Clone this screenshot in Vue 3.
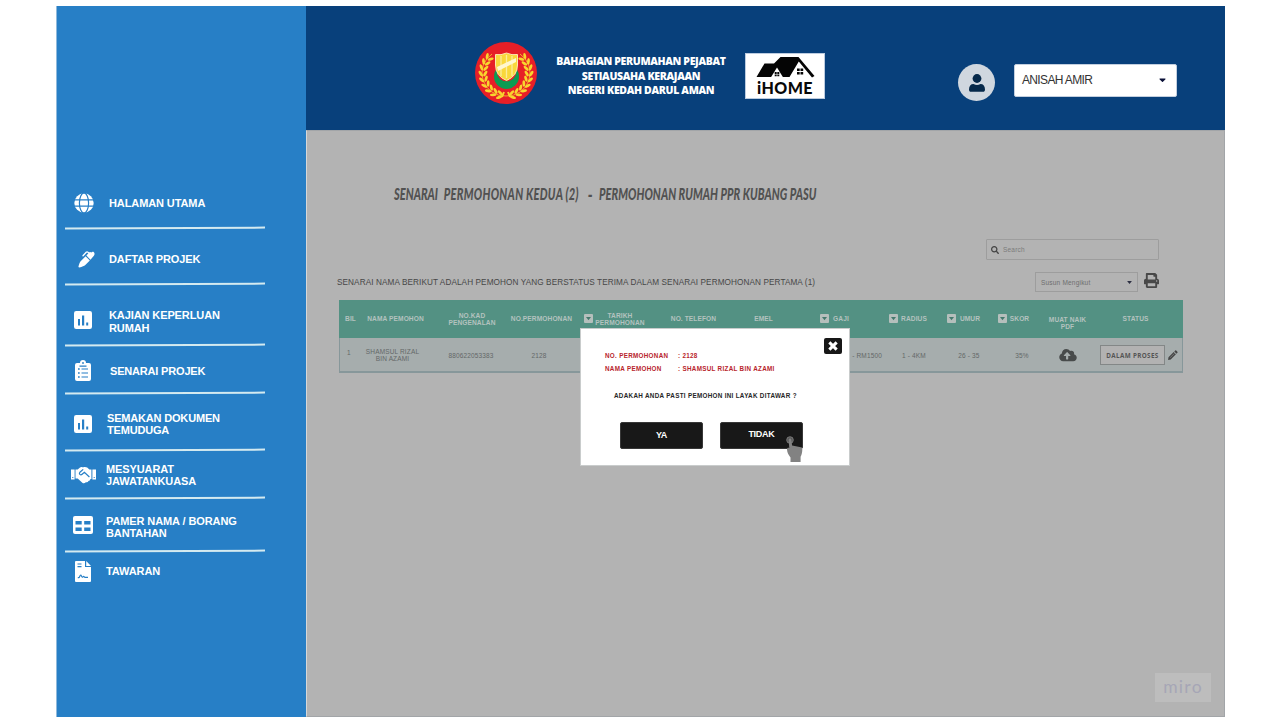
<script setup>
const menu = [
  { id: 'home', icon: 'globe', lines: ['HALAMAN UTAMA'] },
  { id: 'register', icon: 'pen', lines: ['DAFTAR PROJEK'] },
  { id: 'study', icon: 'chart', lines: ['KAJIAN KEPERLUAN', 'RUMAH'] },
  { id: 'projects', icon: 'clipboard', lines: ['SENARAI PROJEK'] },
  { id: 'documents', icon: 'chart', lines: ['SEMAKAN DOKUMEN', 'TEMUDUGA'] },
  { id: 'meeting', icon: 'handshake', lines: ['MESYUARAT', 'JAWATANKUASA'] },
  { id: 'display', icon: 'table', lines: ['PAMER NAMA / BORANG', 'BANTAHAN'] },
  { id: 'offer', icon: 'file', lines: ['TAWARAN'] },
]
const columns = [
  { lines: ['BIL'] },
  { lines: ['NAMA PEMOHON'] },
  { lines: ['NO.KAD', 'PENGENALAN'] },
  { lines: ['NO.PERMOHONAN'] },
  { lines: ['TARIKH', 'PERMOHONAN'], filter: 'tight' },
  { lines: ['NO. TELEFON'] },
  { lines: ['EMEL'] },
  { lines: ['GAJI'], filter: 'wide' },
  { lines: ['RADIUS'], filter: 'mid' },
  { lines: ['UMUR'], filter: 'wide' },
  { lines: ['SKOR'], filter: 'mid' },
  { lines: ['MUAT NAIK', 'PDF'], low: true },
  { lines: ['STATUS'] },
]
// Leaves of the wreath, in degrees measured from the bottom of the crest
const leaves = []
for (let i = 0; i < 9; i++) {
  const deg = 16 + i * 14.5
  const rad = (deg * Math.PI) / 180
  for (const side of [-1, 1]) {
    for (const lay of [-1, 1]) {
      const r = 23 + lay * 2.3
      leaves.push({
        x: 31 + side * Math.sin(rad) * r,
        y: 31 + Math.cos(rad) * r,
        a: side * (-deg + lay * 32),
      })
    }
  }
}
</script>

<template>
  <div class="board">
    <aside class="sidebar">
      <nav>
        <div v-for="m in menu" :key="m.id" class="item" :class="m.id">
          <span class="icon">
            <svg v-if="m.icon === 'globe'" width="20" height="20" viewBox="0 0 20 20">
              <circle cx="10" cy="10" r="9.7" fill="#fff" />
              <g fill="none" stroke="#277fc6" stroke-width="1.2">
                <ellipse cx="10" cy="10" rx="4.6" ry="10" />
                <path d="M0 6.8h20M0 13.2h20" />
              </g>
            </svg>
            <svg v-else-if="m.icon === 'pen'" width="17" height="17" viewBox="0 0 17 17" fill="#fff">
              <path d="M7.6 5.2l4.2 4.3-4.5 4.6c-1.1 1.1-3 1.7-6 2.5L.4 16C1 12.900 1.700 11.200 2.900 9.900z" />
              <path d="M8.400 4.400l2.700-2.900c.9-.9 1.600-.6 2.200 0C14.200.300 16.200.400 16.500 2.400c.2 1.300-.4 2.200-1.300 3.200l-2.700 3.100z" />
              <path d="M5 4.800l3.200-3.500c.5-.5 1.100-.6 1.700-.1l1 .9" fill="none" stroke="#fff" stroke-width="1.300" stroke-linecap="round" />
            </svg>
            <svg v-else-if="m.icon === 'chart'" width="18" height="18" viewBox="0 0 18 18">
              <rect width="18" height="18" rx="2.200" fill="#fff" />
              <path d="M4 8h2v6.500H4zM8 4.500h2.200v10H8zM12.200 11.500h2v3h-2z" fill="#277fc6" />
            </svg>
            <svg v-else-if="m.icon === 'clipboard'" width="16" height="21" viewBox="0 0 16 21">
              <path d="M2 3h3a3 3 0 0 1 6 0h3a2 2 0 0 1 2 2v14a2 2 0 0 1-2 2H2a2 2 0 0 1-2-2V5a2 2 0 0 1 2-2z" fill="#fff" />
              <circle cx="8" cy="3" r=".9" fill="#277fc6" />
              <g stroke="#277fc6" stroke-width="1.200"><path d="M6.500 9h6.500M6.500 13h6.500M6.500 17h6.500M4.500 6.200h7" /><path stroke-width="1.700" d="M3 9h1.700M3 13h1.700M3 17h1.700" /></g>
            </svg>
            <svg v-else-if="m.icon === 'handshake'" width="25" height="18" viewBox="0 0 25 18">
              <g fill="#fff">
                <path d="M0 3.500h3.600v10H0zM21.400 3.500H25v10h-3.600z" />
                <path d="M4.500 3.500h2.200l2-1.700c1-.8 2-.9 3.200-.4 1.400-.6 3-.6 4.300.2l2.200 1.900h2v9.500h-1c-.3 1.400-1 1.900-2 1.900-.6 1.300-1.600 1.700-2.600 1.300-1 1.300-2.400 1.400-3.500.5L6.700 12.500H4.500z" />
              </g>
              <path d="M12.200 3.400L8.900 6.300c-.7.7-.6 1.600 0 2.100.7.600 1.500.5 2.200-.1l2.300-2 5 4.700" fill="none" stroke="#277fc6" stroke-width="1.200" />
              <path d="M1.300 11.500h1M22.700 11.500h1" stroke="#277fc6" />
            </svg>
            <svg v-else-if="m.icon === 'table'" width="20" height="18" viewBox="0 0 20 18">
              <rect width="20" height="18" rx="2" fill="#fff" />
              <path d="M2.500 5h6.200v3.600H2.500zM11.200 5h6.300v3.600h-6.300zM2.500 11.500h6.200V15H2.500zM11.200 11.500h6.300V15h-6.300z" fill="#277fc6" />
            </svg>
            <svg v-else width="16" height="21" viewBox="0 0 16 21">
              <path d="M1 0h9v6h6v14a1 1 0 0 1-1 1H1a1 1 0 0 1-1-1V1a1 1 0 0 1 1-1zM11.200 0L16 4.900h-4.800z" fill="#fff" />
              <path d="M2.500 3h4M2.500 5.700h4M2.800 16.700h1c.8 0 1-2.700 1.900-2.700.8 0 .8 2.200 1.600 2.200.6 0 .7-.8 1.300-.8.700 0 .6 1 1.400 1H13" fill="none" stroke="#277fc6" stroke-width="1.200" />
            </svg>
          </span>
          <span class="label"><span v-for="l in m.lines" :key="l">{{ l }}</span></span>
        </div>
      </nav>
    </aside>

    <header class="top">
      <svg class="crest" width="62" height="62" viewBox="0 0 62 62">
        <circle cx="31" cy="31" r="31" fill="#e71f27" />
        <path d="M17 12A23 23 0 0 0 31 54 23 23 0 0 0 45 12" fill="none" stroke="#f4d22c" stroke-width=".8" />
        <ellipse v-for="(f, i) in leaves" :key="i" rx="3.200" ry="1.400" fill="#f8d62e" :transform="`translate(${f.x} ${f.y}) rotate(${f.a})`" />
        <path d="M29 50l-2 5M33 50l2 5" stroke="#f8d62e" stroke-width="2" />
        <circle cx="31.500" cy="34.500" r="12.500" fill="#0c9b52" />
        <circle cx="31.500" cy="29.500" r="9.800" fill="#e71f27" />
        <path d="M20.500 12.500q5.500 1 11-1.500 5.500 2.500 11 1.500V23q0 11-11 15.500Q20.500 34 20.500 23z" fill="#f9d73b" stroke="#fff3bd" stroke-width=".9" />
        <path d="M26 14v20M31.500 13v23M37 14v20" stroke="#fbec9b" stroke-width="1.300" />
        <path d="M22 25L41 16v4L23 29z" fill="#fff6cf" />
      </svg>
      <div class="dept">
        <div class="d1">BAHAGIAN PERUMAHAN PEJABAT</div>
        <div class="d2">SETIAUSAHA KERAJAAN</div>
        <div class="d3">NEGERI KEDAH DARUL AMAN</div>
      </div>
      <div class="ihome">
        <svg width="60" height="24" viewBox="0 0 60 24">
          <path d="M1.500 23L9.500 9.500H19L25.500 3H43.500L59.500 22 57 23.500 43.800 7.500 34.500 23z" fill="#050505" />
          <path d="M22 13.500L28 23.200H16z" fill="#fff" />
          <path d="M19.700 18h2v1.900h-2zM22.300 18h2v1.900h-2zM19.700 20.400h2v1.900h-2zM22.300 20.400h2v1.900h-2zM42 14.500h2.700v2.600H42zM45.500 14.500h2.700v2.600h-2.700zM42 18h2.700v2.600H42zM45.500 18h2.700v2.600h-2.700z" fill="#050505" />
        </svg>
        <span>iHOME</span>
      </div>
      <div class="avatar">
        <svg width="16" height="18" viewBox="0 0 16 18" fill="#06294a">
          <circle cx="8" cy="4.500" r="4.400" />
          <path d="M0 15.500C0 12 1.700 10 4.500 10c1.200.7 2.300 1 3.500 1s2.300-.3 3.500-1c2.800 0 4.500 2 4.500 5.500 0 1.600-.7 2.300-2 2.300H2c-1.300 0-2-.7-2-2.300z" />
        </svg>
      </div>
      <div class="user"><span>ANISAH AMIR</span><svg width="7" height="4.500" viewBox="0 0 8 5"><path d="M.8.500h6.400q.6.400 0 1L4.500 4.300q-.5.400-1 0L.8 1.500q-.6-.6 0-1z" fill="#0a1038" /></svg></div>
    </header>

    <main class="content">
      <h1 class="title"><span>SENARAI</span><span class="second">PERMOHONAN KEDUA (2)</span><span class="dash">-</span><span class="third">PERMOHONAN RUMAH PPR KUBANG PASU</span></h1>
      <div class="search">
        <svg width="8" height="8" viewBox="0 0 512 512" fill="#444"><path d="M505 442.700L405.300 343c-4.500-4.500-10.600-7-17-7H372c27.600-35.300 44-79.700 44-128C416 93.100 322.900 0 208 0S0 93.100 0 208s93.100 208 208 208c48.300 0 92.700-16.400 128-44v16.300c0 6.400 2.500 12.500 7 17l99.700 99.700c9.400 9.400 24.600 9.400 33.900 0l28.300-28.300c9.400-9.400 9.400-24.600.1-34zM208 336c-70.700 0-128-57.200-128-128 0-70.700 57.200-128 128-128 70.700 0 128 57.200 128 128 0 70.700-57.200 128-128 128z" /></svg>
        <span>Search</span>
      </div>
      <div class="toolbar">
        <p>SENARAI NAMA BERIKUT ADALAH PEMOHON YANG BERSTATUS TERIMA DALAM SENARAI PERMOHONAN PERTAMA (1)</p>
        <div class="sort"><span>Susun Mengikut</span><svg width="5" height="3" viewBox="0 0 8 5"><path d="M0 0h8L4 5z" fill="#2c2f42" /></svg></div>
        <svg class="print" width="15" height="15" viewBox="0 0 512 512" fill="#484848"><path d="M448 192V77.250c0-8.490-3.370-16.620-9.370-22.630L393.370 9.370c-6-6-14.140-9.370-22.630-9.370H96C78.330 0 64 14.330 64 32v160c-35.350 0-64 28.650-64 64v112c0 8.840 7.160 16 16 16h48v96c0 17.670 14.330 32 32 32h320c17.670 0 32-14.330 32-32v-96h48c8.840 0 16-7.160 16-16V256c0-35.350-28.650-64-64-64zm-64 256H128v-96h256v96zm0-224H128V64h192v48c0 8.840 7.160 16 16 16h48v96zm48 72c-13.250 0-24-10.750-24-24 0-13.260 10.750-24 24-24s24 10.740 24 24c0 13.250-10.750 24-24 24z" /></svg>
      </div>

      <section class="table">
        <div class="thead">
          <div v-for="c in columns" :key="c.lines[0]" class="th" :class="[c.filter, { low: c.low }]">
            <svg v-if="c.filter" width="9" height="9" viewBox="0 0 9 9"><rect width="9" height="9" rx="1" fill="#b5bfbc" /><path d="M2 3h5L4.500 6.300z" fill="#44796d" /></svg>
            <span class="stack"><span v-for="l in c.lines" :key="l">{{ l }}</span></span>
          </div>
        </div>
        <div class="row">
          <span class="num">1</span>
          <span class="stack"><span>SHAMSUL RIZAL</span><span>BIN AZAMI</span></span>
          <span class="ic">880622053383</span>
          <span>2128</span>
          <span class="salary">- RM1500</span>
          <span>1 - 4KM</span>
          <span>26 - 35</span>
          <span>35%</span>
          <svg class="cloud" width="18" height="14" viewBox="0 0 640 512" fill="#484b4b"><path d="M537.600 226.600c4.100-10.700 6.400-22.400 6.400-34.600 0-53-43-96-96-96-19.700 0-38.100 6-53.300 16.200C367 64.200 315.300 32 256 32c-88.400 0-160 71.600-160 160 0 2.700.1 5.400.2 8.100C40.200 219.800 0 273.200 0 336c0 79.500 64.500 144 144 144h368c70.700 0 128-57.300 128-128 0-61.900-44-113.600-102.400-125.400zM393.400 288H328v112c0 8.800-7.200 16-16 16h-48c-8.800 0-16-7.200-16-16V288h-65.400c-14.300 0-21.400-17.200-11.300-27.300l105.400-105.400c6.200-6.200 16.400-6.200 22.600 0l105.400 105.400c10.100 10.100 2.900 27.300-11.300 27.300z" /></svg>
          <div class="status">
            <span class="badge">DALAM PROSES</span>
            <svg width="10" height="10" viewBox="0 0 10 10" fill="#444"><path d="M7.200.600q.5-.5 1 0l1.200 1.200q.5.500 0 1l-.9.900-2.200-2.200zM5.700 2.100l2.200 2.200L2.700 9.500.1 9.900.5 7.300z" /><path d="M2 7.800l4.500-4.500" stroke="#a6adad" stroke-width=".5" /></svg>
          </div>
        </div>
      </section>
    </main>

    <div class="modal">
      <button class="close"><svg width="10" height="10" viewBox="0 0 9 9"><path d="M1.200 1.200l6.600 6.600M7.800 1.200L1.200 7.800" stroke="#fff" stroke-width="2.700" /></svg></button>
      <dl>
        <dt>NO. PERMOHONAN</dt><dd>: 2128</dd>
        <dt>NAMA PEMOHON</dt><dd>: SHAMSUL RIZAL BIN AZAMI</dd>
      </dl>
      <p>ADAKAH ANDA PASTI PEMOHON INI LAYAK DITAWAR ?</p>
      <div class="actions"><button>YA</button><button class="no">TIDAK</button></div>
      <svg class="pointer" width="18" height="28" viewBox="0 0 18 28">
        <circle cx="5" cy="5" r="3.300" fill="#555" stroke="#858585" stroke-width=".8" />
        <path d="M3.600 5a1.400 1.400 0 0 1 2.800 0l.7 5.500 8.800 1.800c1.200.3 1.500 1.200 1.400 2.400-.1 2.800-.6 5-1.700 7.100V27H5.500v-4.500C3.500 20 2.200 17.500 2 14.500c0-1.500.8-2 2.300-1.600z" fill="#828282" />
      </svg>
    </div>
    <div class="miro">miro</div>
  </div>
</template>

<style>
body { background: #fff; }
</style>

<style scoped>
* { box-sizing: border-box; }
.board {
  position: relative;
  display: grid;
  grid-template: 124px 587px / 250px 919px;
  width: 1169px;
  margin: 6px 0 0 56px;
  font-family: "Liberation Sans", Arial, sans-serif;
}
.sidebar { grid-row: 1 / 3; background: #277fc6; border-left: 1px solid #8fb9dc; padding: 172px 0 0 8px; }
.item {
  position: relative;
  display: flex;
  align-items: center;
  width: 200px;
  height: 51px;
  color: #fff;
  font-weight: 700;
  font-size: 11px;
  line-height: 12px;
  letter-spacing: -.1px;
}
.item::after { content: ""; position: absolute; left: 0; right: 0; bottom: .2px; height: 1.600px; background: #d4eaf0; transform: rotate(-.22deg); }
.item.offer::after { display: none; }
.icon { display: flex; justify-content: center; width: 37px; flex: none; }
.icon svg { display: block; }
.label { display: flex; flex-direction: column; margin-left: 4px; white-space: nowrap; }
.home { padding-bottom: 1px; }
.home .icon { padding-left: 1px; }
.home .label, .study .label { margin-left: 7px; }
.register { height: 56px; padding-top: 4px; }
.register .icon { padding-left: 5px; }
.register .label { margin-left: 7px; }
.study .icon, .documents .icon, .projects .icon, .display .icon, .offer .icon { padding-right: 2px; }
.study { height: 61px; padding-top: 12px; line-height: 13px; }
.study .icon { margin-top: -3px; }
.projects { height: 48px; padding-top: 1px; }
.projects .label { margin-left: 8px; letter-spacing: -.18px; }
.documents { height: 57px; padding-top: 2px; }
.documents .label { margin-left: 5px; letter-spacing: -.18px; }
.meeting { height: 48px; }
.display { height: 53px; padding-top: 2px; }
.display .icon { margin-top: -4px; }
.offer { height: 38px; }

.top { display: flex; align-items: flex-start; background: #08407b; padding-left: 169px; }
.crest { margin-top: 36px; flex: none; }
.dept { width: 182px; margin: 48px 0 0 13px; text-align: center; color: #fff; font: 800 10.500px/14.700px "Open Sans", sans-serif; letter-spacing: -.33px; white-space: nowrap; }
.ihome { display: flex; flex-direction: column; align-items: center; width: 80px; height: 46px; margin: 47px 0 0 13px; background: #fff; border: 1px solid #bccce0; }
.ihome svg { flex: none; }
.ihome span { font: 900 16px/17px Lato, sans-serif; color: #080808; letter-spacing: .4px; margin-top: 1px; }
.avatar { display: flex; align-items: center; justify-content: center; width: 37px; height: 37px; margin: 58px 0 0 133px; border-radius: 50%; background: #d0d7df; }
.user { display: flex; align-items: center; justify-content: space-between; width: 163px; height: 33px; margin: 58px 0 0 19px; padding: 0 10px 0 7px; background: #fff; border: 1px solid #c3cfdf; border-radius: 2px; color: #333; font-size: 12px; }
.user span { letter-spacing: -.65px; margin-top: -2px; }

.content { background: #b3b3b3; border: 1px solid #a2a5a8; border-left-color: #d5d8da; padding-left: 30px; }
.title { display: flex; gap: 8.500px; width: max-content; height: 20px; margin: 53px 0 0 57px; color: #515151; font: italic 900 16.500px/20px Lato, sans-serif; white-space: nowrap; transform: scaleX(.67); transform-origin: 0 0; }
.title .second { letter-spacing: .42px; }
.title .third { letter-spacing: .06px; }
.title .dash { margin: 0 1px 0 5px; font-size: 21px; }
.search { display: flex; align-items: center; gap: 4px; width: 173px; height: 21px; margin: 35px 0 0 649px; padding-left: 4px; border: 1px solid #9d9d9d; border-radius: 1px; color: #7b7b7b; font-size: 6.500px; letter-spacing: .2px; }
.toolbar { display: flex; align-items: center; height: 20px; margin-top: 12px; }
.toolbar p { width: 698px; margin: 0; font-size: 8.200px; letter-spacing: .095px; color: #474747; white-space: nowrap; }
.sort { display: flex; align-items: center; justify-content: space-between; width: 103px; height: 20px; padding: 0 5px 0 5px; border: 1px solid #9d9d9d; color: #6e6e6e; font-size: 6.500px; letter-spacing: .2px; flex: none; }
.print { margin: -4px 0 0 6px; }

.table { width: 844px; height: 73px; margin: 8px 0 0 2px; border: solid #87979a; border-width: 0 1px 2px; background: #a6adad; }
.thead { display: grid; grid-template-columns: 21px 69px 84px 55px 91px 67px 73px 69px 78px 33px 67px 41px 95px; height: 38px; margin: 0 -1px; padding-left: 1px; background: #539183; color: #b4c2bf; font-weight: 700; font-size: 6.600px; line-height: 7px; letter-spacing: .1px; }
.th { display: flex; align-items: center; justify-content: center; white-space: nowrap; padding-bottom: 1px; }
.th svg { flex: none; }
.th.low { padding-top: 8px; }
.tight { gap: 2px; }
.mid { gap: 3px; }
.wide { gap: 4px; }
.stack { display: flex; flex-direction: column; align-items: center; }
.row { display: grid; grid-template-columns: 18px 69px 88px 48px 319px 64px 46px 60px 31px 99px; align-items: center; justify-items: center; height: 33px; padding-top: 1px; color: #646868; font-size: 6.500px; line-height: 7px; letter-spacing: .15px; white-space: nowrap; }
.num { margin-top: -5px; }
.salary { justify-self: end; }
.status { display: flex; align-items: center; gap: 3px; justify-self: start; padding-left: 17px; }
.badge { display: flex; align-items: center; justify-content: center; width: 65px; height: 20px; border: 1px solid #838787; background: #b2b2b2; color: #555; font: 700 6.300px "Open Sans", sans-serif; letter-spacing: .35px; }

.modal { position: absolute; left: 524px; top: 322px; width: 270px; height: 138px; padding: 20px 25px 0; background: #fff; border: 1px solid #c9cccc; color: #262626; font-size: 6.300px; font-weight: 700; }
.close { position: absolute; top: 9px; right: 7px; display: flex; align-items: center; justify-content: center; width: 18px; height: 16px; padding: 0; border: 0; border-radius: 2px; background: #171717; }
dl { display: grid; grid-template-columns: 73px 1fr; margin: 0; color: #b8252c; line-height: 13px; letter-spacing: .3px; white-space: nowrap; margin-left: -1px; }
dd { margin: 0; }
.modal p { margin: 14px 0 0 8px; line-height: 13px; letter-spacing: .31px; white-space: nowrap; }
.actions { display: flex; gap: 17px; margin: 20px 0 0 14px; }
.actions button { width: 83px; height: 27px; padding: 0 0 2px; border: 1px solid #383838; border-radius: 2px; background: #181818; color: #fff; font: 700 9px "Liberation Sans", Arial, sans-serif; letter-spacing: -.25px; flex: none; }
.actions .no { padding-bottom: 3px; }
.pointer { position: absolute; left: 204px; top: 106px; }
.miro { position: absolute; left: 1099px; top: 667px; width: 56px; height: 29px; background: #bdbdbd; color: #a6a6b6; text-align: center; font: 400 17.500px/28px Lato, sans-serif; letter-spacing: 1.300px; }
</style>
